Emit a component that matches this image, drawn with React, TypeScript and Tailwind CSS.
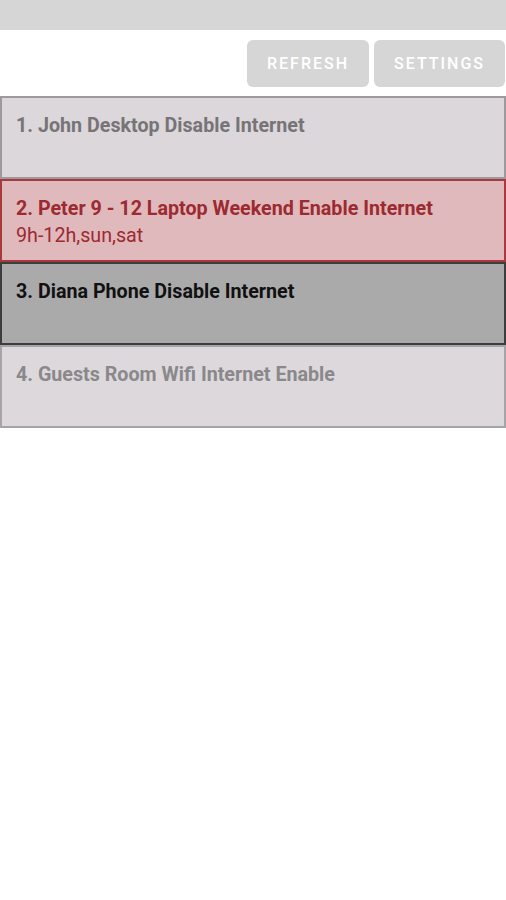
export default function App() {
  const items = [
    {
      title: "1. John Desktop Disable Internet",
      sub: "",
      box: "bg-[#dcd7db] border-[#9c9a9c]",
      text: "text-[#767476]",
    },
    {
      title: "2. Peter 9 - 12 Laptop Weekend Enable Internet",
      sub: "9h-12h,sun,sat",
      box: "bg-[#e0b9bc] border-[#a83a3f]",
      text: "text-[#9c2a30]",
    },
    {
      title: "3. Diana Phone Disable Internet",
      sub: "",
      box: "bg-[#aaaaaa] border-[#3d3d3d]",
      text: "text-[#111111]",
    },
    {
      title: "4. Guests Room Wifi Internet Enable",
      sub: "",
      box: "bg-[#dcd8dc] border-[#a6a4a6]",
      text: "text-[#8a888a]",
    },
  ];
  return (
    <div className="w-[506px] min-h-[900px] bg-white font-['Roboto',sans-serif]">
      <div className="h-[30px] bg-[#d6d6d6]" />
      <div className="flex justify-end gap-[5px] pt-[10px] pr-[1px]">
        <button className="w-[122px] h-[47px] rounded-[6px] bg-[#d6d6d6] text-white text-[16px] font-medium tracking-[2px] uppercase">
          Refresh
        </button>
        <button className="w-[131px] h-[47px] rounded-[6px] bg-[#d6d6d6] text-white text-[16px] font-medium tracking-[2px] uppercase">
          Settings
        </button>
      </div>
      <div className="mt-[9px] flex flex-col">
        {items.map((it) => (
          <div
            key={it.title}
            className={`h-[83px] border-2 px-[14px] pt-[14px] ${it.box} ${it.text}`}
          >
            <div className="text-[19.7px] leading-[27px] font-bold">{it.title}</div>
            {it.sub && <div className="text-[19.7px] leading-[27px]">{it.sub}</div>}
          </div>
        ))}
      </div>
    </div>
  );
}
